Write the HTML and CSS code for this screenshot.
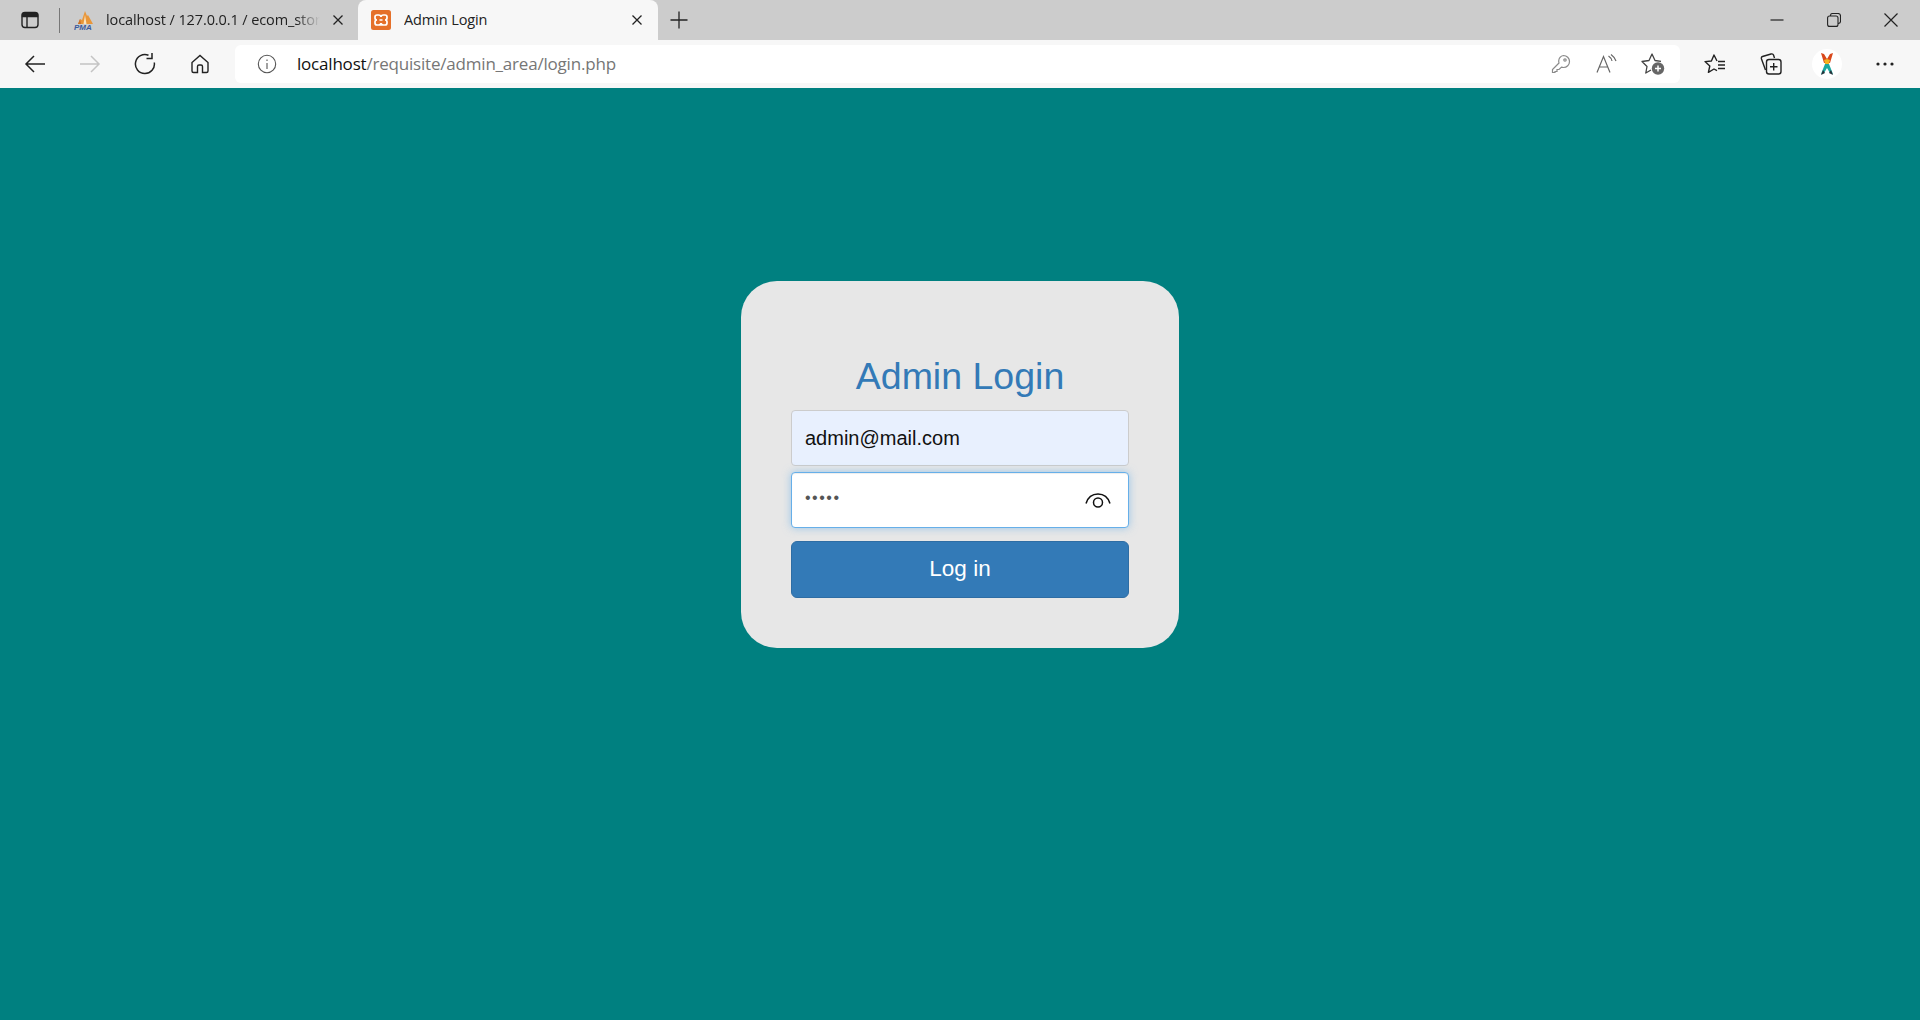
FILE: index.html
```html
<!DOCTYPE html>
<html lang="en">
<head>
  <meta charset="UTF-8" />
  <title>Admin Login</title>
  <link rel="stylesheet" href="styles.css">
</head>
<body>
  <div class="tabstrip">
    <div class="panel-btn">
      <svg width="18" height="18" viewBox="0 0 18 18" fill="none" stroke="#222" stroke-width="1.4"><rect x="1" y="1.5" width="16" height="15" rx="3"/><path d="M1.500 3.500q0-1.500 2-1.500h11q2 0 2 1.500v2h-15z" fill="#222"/><path d="M6 5v11"/></svg>
    </div>
    <div class="strip-sep"></div>
    <div class="tab">
      <svg class="favicon" width="20" height="20" viewBox="0 0 20 20"><path d="M11 1l2 5 1-1 5 9H4l2-5 2 1z" fill="#e8963a"/><path d="M11 5l1.500 9h-3z" fill="#fbe3bd"/><path d="M6 9l1 5H4z" fill="#c8702a"/><text x="0" y="19.500" class="pma-text">PMA</text></svg>
      <span class="tab-title fade">localhost / 127.0.0.1 / ecom_store</span>
      <svg class="close" width="12" height="12" viewBox="0 0 12 12" stroke="#222" stroke-width="1.3"><path d="M1.500 1.500l9 9M10.500 1.500l-9 9"/></svg>
    </div>
    <div class="tab active">
      <svg class="favicon" width="20" height="20" viewBox="0 0 20 20"><rect width="20" height="20" rx="2.500" fill="#e5702a"/><path d="M7.500 5H6a2 2 0 0 0-2 2v1a2 2 0 0 0 2 2a2 2 0 0 0-2 2v1a2 2 0 0 0 2 2h1.500q2.500 0 2.500-2q0 2 2.500 2H14a2 2 0 0 0 2-2v-1a2 2 0 0 0-2-2a2 2 0 0 0 2-2V7a2 2 0 0 0-2-2h-1.500q-2.500 0-2.500 2q0-2-2.500-2zM8.500 10h3" fill="none" stroke="#fff" stroke-width="1.700"/></svg>
      <span class="tab-title">Admin Login</span>
      <svg class="close" width="12" height="12" viewBox="0 0 12 12" stroke="#222" stroke-width="1.3"><path d="M1.500 1.500l9 9M10.500 1.500l-9 9"/></svg>
    </div>
    <div class="new-tab">
      <svg width="18" height="18" viewBox="0 0 18 18" stroke="#222" stroke-width="1.300"><path d="M9 0.500v17M0.500 9h17"/></svg>
    </div>
    <div class="window-controls">
      <div class="win-btn"><svg width="14" height="14" viewBox="0 0 14 14" stroke="#222" stroke-width="1.200"><path d="M0.500 7h13"/></svg></div>
      <div class="win-btn"><svg width="14" height="14" viewBox="0 0 14 14" fill="none" stroke="#222" stroke-width="1.100"><rect x="0.600" y="3" width="10.400" height="10.400" rx="2"/><path d="M3.500 3V2.500q0-2 2-2h5.500q2.500 0 2.500 2.500v5.500q0 2-2.500 2"/></svg></div>
      <div class="win-btn"><svg width="14" height="14" viewBox="0 0 14 14" stroke="#222" stroke-width="1.200"><path d="M0.500 0.500l13 13M13.500 0.500l-13 13"/></svg></div>
    </div>
  </div>

  <div class="toolbar">
    <div class="nav-btn"><svg width="22" height="20" viewBox="0 0 22 20" fill="none" stroke="#222" stroke-width="1.500"><path d="M21 10H2M10 2l-8 8 8 8"/></svg></div>
    <div class="nav-btn"><svg width="22" height="20" viewBox="0 0 22 20" fill="none" stroke="#c4c4c4" stroke-width="1.500"><path d="M1 10h19M12 2l8 8-8 8"/></svg></div>
    <div class="nav-btn"><svg width="22" height="22" viewBox="0 0 22 22" fill="none" stroke="#222" stroke-width="1.500"><path d="M14.500 2.200A9.500 9.500 0 1 0 20.300 9.500"/><path d="M15 0.500v5.500h-5.500" transform="translate(3 -0.500)"/></svg></div>
    <div class="nav-btn"><svg width="20" height="20" viewBox="0 0 20 20" fill="none" stroke="#222" stroke-width="1.400"><path d="M7.500 18.500H3.500q-1.500 0-1.500-1.500V8.500L10 1.500l8 7V17q0 1.500-1.500 1.500h-4V12.500q0-1.500-1.500-1.500H9q-1.500 0-1.500 1.500z"/></svg></div>

    <div class="address-bar">
      <svg class="info-icon" width="20" height="20" viewBox="0 0 20 20" fill="none" stroke="#555" stroke-width="1.100"><circle cx="10" cy="10" r="8.700"/><path d="M10 9v6M10 5.500v1.500"/></svg>
      <span class="url"><span class="url-host">localhost</span>/requisite/admin_area/login.php</span>
      <div class="address-tools">
        <div class="addr-btn"><svg width="20" height="20" viewBox="0 0 20 20" fill="none" stroke="#8a8a8a" stroke-width="1.200"><path d="M12.500 1.500a6 6 0 0 1 0 12q-1 0-2-.4L8 15.500H6V17.500H4v1H1.500v-3l6.500-6.500q-.3-1-.3-2a6 6 0 0 1 4.800-5.500z"/><circle cx="14" cy="6" r="1.200"/></svg></div>
        <div class="addr-btn"><svg width="22" height="20" viewBox="0 0 22 20" fill="none" stroke="#666" stroke-width="1.200"><path d="M1 18.500L7.500 2.500l6.500 16M3.500 13h8"/><path d="M12.500 2q3 2 3.500 5M15 .5q3.500 2.500 5 6.500"/></svg></div>
        <div class="addr-btn"><svg width="24" height="22" viewBox="0 0 24 22"><path d="M20 8.300L14 7.500 11 1 8 7.500 1 8.500l5 5-1.200 6.500L10 17" fill="none" stroke="#444" stroke-width="1.300" stroke-linejoin="round"/><circle cx="17" cy="15.500" r="6.200" fill="#666"/><path d="M17 12.500v6M14 15.500h6" stroke="#fff" stroke-width="1.500"/></svg></div>
      </div>
    </div>

    <div class="tool-btn"><svg width="22" height="20" viewBox="0 0 22 20" fill="none" stroke="#222" stroke-width="1.400" stroke-linejoin="round"><path d="M13 7L10 1 7.400 7 1 7.600l4.800 4.400-1.400 6.400 5.600-3.400 3 1.600"/><path d="M14 7.500h7M14 11h7M14 14.500h7"/></svg></div>
    <div class="tool-btn"><svg width="22" height="22" viewBox="0 0 22 22" fill="none" stroke="#222" stroke-width="1.400"><path d="M5.500 17L1.500 6q-.6-2 1-2.500L11 1q2-.5 2.500 1l1 3"/><rect x="6.500" y="6.500" width="14.500" height="14.500" rx="2.500"/><path d="M13.700 10v7.500M10 13.700h7.500"/></svg></div>
    <div class="tool-btn">
      <div class="avatar">
        <svg width="14" height="23" viewBox="0 0 14 23"><path d="M1 0l3 1 3 5 3-5 3-1-3 10H4z" fill="#d9481c"/><path d="M4 7l3-1 3 1-1.500 5h-3z" fill="#f4b21f"/><path d="M5 11h4l4 10-3-1-3-5-3 5-3 1z" fill="#1ba8a0"/><path d="M1 22l2-5 2 3z" fill="#26323a"/><path d="M13 22l-2-5-2 3z" fill="#26323a"/></svg>
      </div>
    </div>
    <div class="tool-btn dots"><svg width="18" height="4" viewBox="0 0 18 4" fill="#222"><circle cx="2" cy="2" r="1.600"/><circle cx="9" cy="2" r="1.600"/><circle cx="16" cy="2" r="1.600"/></svg></div>
  </div>

  <div class="page">
    <form class="login-card">
      <h2 class="login-title">Admin Login</h2>
      <input class="form-input autofilled" type="email" value="admin@mail.com">
      <div class="password-wrap">
        <input class="form-input focused" type="password" value="admin">
        <svg class="eye" width="26" height="16" viewBox="0 0 26 16" fill="none" stroke="#111" stroke-width="1.500"><path d="M1 10.500C3 4 8 1 13 1s10 3 12 9.500"/><circle cx="13" cy="9.500" r="4.500"/></svg>
      </div>
      <button class="login-btn" type="button">Log in</button>
    </form>
  </div>
</body>
</html>
```

FILE: styles.css
```css
* {
  box-sizing: border-box;
}
html, body {
  height: 100%;
}
body {
  margin: 0;
  display: flex;
  flex-direction: column;
  height: 1020px;
  overflow: hidden;
  font-family: "Open Sans", sans-serif;
  background-color: #008080;
}

/* browser frame */
.tabstrip {
  display: flex;
  align-items: flex-end;
  height: 40px;
  background-color: #cccccc;
}
.panel-btn {
  display: flex;
  align-items: center;
  justify-content: center;
  width: 59px;
  height: 40px;
}
.strip-sep {
  width: 1px;
  height: 25px;
  margin-bottom: 7px;
  background-color: #777;
}
.tab {
  display: flex;
  align-items: center;
  width: 298px;
  height: 40px;
  padding: 0 14px;
  font-size: 14.5px;
  color: #222;
}
.tab.active {
  width: 300px;
  padding-right: 15px;
  background-color: #f7f7f7;
  border-radius: 8px 8px 0 0;
}
.tab .favicon {
  flex: none;
  margin-right: 12px;
}
.tab.active .favicon {
  margin-left: -1px;
  margin-right: 13px;
}
.tab-title {
  flex: 1;
  padding-bottom: 2px;
  overflow: hidden;
  white-space: nowrap;
  letter-spacing: -0.1px;
}
.tab-title.fade {
  -webkit-mask-image: linear-gradient(to left, transparent 0, #000 24px);
  mask-image: linear-gradient(to left, transparent 0, #000 24px);
  margin-right: 12px;
}
.pma-text {
  font: italic bold 8px "Liberation Sans", sans-serif;
  fill: #3a5a9c;
}
.new-tab {
  display: flex;
  align-items: center;
  justify-content: center;
  width: 42px;
  height: 40px;
}
.window-controls {
  display: flex;
  margin-left: auto;
  padding-right: 1px;
  height: 40px;
}
.win-btn {
  display: flex;
  align-items: center;
  justify-content: center;
  width: 57px;
  height: 40px;
}

.toolbar {
  display: flex;
  align-items: center;
  height: 48px;
  padding-left: 7px;
  background-color: #f7f7f7;
}
.nav-btn {
  display: flex;
  align-items: center;
  justify-content: center;
  width: 55px;
  height: 38px;
}
.address-bar {
  display: flex;
  align-items: center;
  width: 1445px;
  height: 38px;
  margin-left: 8px;
  margin-right: 7px;
  padding-left: 22px;
  background-color: #fff;
  border-radius: 6px;
}
.info-icon {
  flex: none;
  margin-right: 20px;
}
.url {
  padding-bottom: 2px;
  font-size: 17px;
  letter-spacing: -0.2px;
  color: #767676;
  white-space: nowrap;
}
.url-host {
  color: #111;
}
.address-tools {
  display: flex;
  margin-left: auto;
  padding-right: 4px;
}
.addr-btn {
  display: flex;
  align-items: center;
  justify-content: center;
  width: 46px;
  height: 38px;
}
.tool-btn {
  display: flex;
  align-items: center;
  justify-content: center;
  width: 56px;
  height: 38px;
}
.tool-btn.dots {
  padding-left: 4px;
}
.avatar {
  display: flex;
  align-items: center;
  justify-content: center;
  width: 30px;
  height: 30px;
  background-color: #fff;
  border-radius: 50%;
}

/* login page */
.page {
  flex: 1;
  display: flex;
  flex-direction: column;
  align-items: center;
  padding-top: 193px;
  background-color: #008080;
  font-family: "Liberation Sans", Arial, sans-serif;
}
.login-card {
  display: flex;
  flex-direction: column;
  width: 438px;
  height: 367px;
  padding: 50px;
  background-color: #e7e7e7;
  border-radius: 36px;
}
.login-title {
  margin: 21px 0 10px;
  font-size: 37.5px;
  font-weight: 400;
  line-height: 48px;
  text-align: center;
  color: #337ab7;
}
.form-input {
  display: block;
  width: 100%;
  height: 56px;
  padding: 0 13px;
  font-family: "Liberation Sans", Arial, sans-serif;
  font-size: 20px;
  color: #111;
  background-color: #fff;
  border: 1px solid #ccc;
  border-radius: 4px;
  outline: none;
}
.form-input.autofilled {
  background-color: #e8f0fe;
}
.form-input.focused {
  padding-bottom: 4px;
  border-color: #66afe9;
  box-shadow: inset 0 1px 1px rgba(0, 0, 0, 0.075), 0 0 8px rgba(102, 175, 233, 0.6);
  color: #555;
  font-size: 16px;
  letter-spacing: 1.500px;
}
.password-wrap {
  position: relative;
  margin-top: 6px;
}
.eye {
  position: absolute;
  right: 18px;
  top: 21px;
}
.login-btn {
  width: 100%;
  height: 57px;
  margin-top: 13px;
  padding-bottom: 3px;
  font-family: "Liberation Sans", Arial, sans-serif;
  font-size: 22.5px;
  color: #fff;
  background-color: #337ab7;
  border: 1px solid #2e6da4;
  border-radius: 6px;
}
```
